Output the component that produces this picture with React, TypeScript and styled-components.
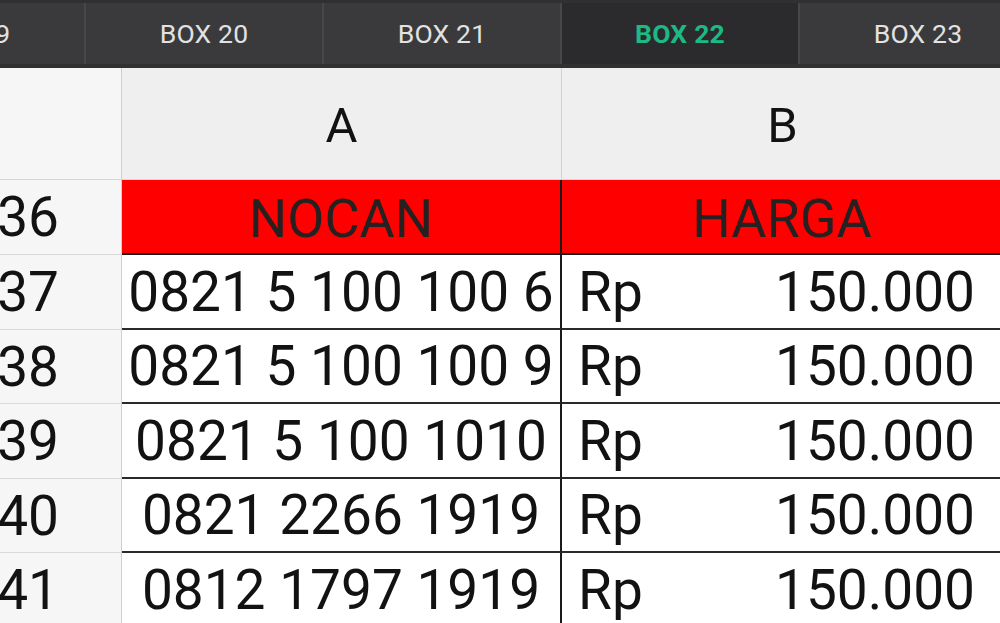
import React from "react";
import styled, { createGlobalStyle } from "styled-components";

const Global = createGlobalStyle`
  html, body { margin: 0; padding: 0; background: #ffffff; }
  body { font-family: Roboto, "Liberation Sans", sans-serif; overflow: hidden; }
`;

const Page = styled.div`
  width: 1000px;
  height: 623px;
  overflow: hidden;
  display: flex;
  flex-direction: column;
  background: #ffffff;
`;

const TabBar = styled.div`
  height: 68px;
  flex: none;
  display: flex;
  background: #3a3a3c;
  border-top: 3px solid #303032;
  border-bottom: 4px solid #313133;
  box-sizing: border-box;
  overflow: hidden;
`;

const Tab = styled.div<{ $active?: boolean; $offset?: number }>`
  flex: none;
  width: 236px;
  margin-left: ${(p) => p.$offset ?? 0}px;
  display: flex;
  align-items: center;
  justify-content: center;
  font-size: 26.5px;
  font-weight: ${(p) => (p.$active ? 700 : 400)};
  color: ${(p) => (p.$active ? "#1db985" : "#e2e2e2")};
  background: ${(p) => (p.$active ? "#2b2b2d" : "#3a3a3c")};
  border-right: 2px solid #47474a;
  letter-spacing: 0.2px;
`;

const Sheet = styled.div`
  flex: 1;
  display: grid;
  grid-template-columns: 122px 440px 442px;
  grid-template-rows: 112px 75px 75px 74px 75px 74px 75px;
  color: #121212;
`;

const Corner = styled.div`
  background: #f6f6f6;
  border-right: 1px solid #cfcfcf;
  border-bottom: 1px solid #d6d6d6;
`;

const ColHead = styled.div`
  background: #efefef;
  border-right: 1px solid #cfd3d8;
  border-bottom: 1px solid #d6d6d6;
  display: flex;
  align-items: center;
  justify-content: center;
  font-size: 49px;
  padding-top: 4px;
`;

const RowHead = styled.div`
  background: #f6f6f6;
  border-right: 1px solid #cfcfcf;
  border-bottom: 1px solid #d9d9d9;
  display: flex;
  align-items: center;
  justify-content: flex-end;
  padding-right: 62px;
  font-size: 55px;
  overflow: visible;
  white-space: nowrap;
`;

const TitleCell = styled.div`
  background: #ff0000;
  color: #262020;
  border-right: 2px solid #1a1a1a;
  border-bottom: 2px solid #1a1a1a;
  display: flex;
  align-items: center;
  justify-content: center;
  font-size: 54px;
  padding-top: 4px;
`;

const NumCell = styled.div`
  border-right: 2px solid #1a1a1a;
  border-bottom: 2px solid #2a2a2a;
  display: flex;
  align-items: center;
  justify-content: center;
  font-size: 55px;
  white-space: nowrap;
  overflow: hidden;
`;

const PriceCell = styled.div`
  border-bottom: 2px solid #2a2a2a;
  display: flex;
  align-items: center;
  justify-content: space-between;
  font-size: 55px;
  padding: 0 29px 0 16px;
  white-space: nowrap;
`;

const rows = [
  { n: 37, num: "0821 5 100 100 6" },
  { n: 38, num: "0821 5 100 100 9" },
  { n: 39, num: "0821 5 100 1010" },
  { n: 40, num: "0821 2266 1919" },
  { n: 41, num: "0812 1797 1919" },
];

export default function App() {
  return (
    <Page>
      <Global />
      <TabBar>
        <Tab $offset={-152}>BOX 19</Tab>
        <Tab>BOX 20</Tab>
        <Tab>BOX 21</Tab>
        <Tab $active>BOX 22</Tab>
        <Tab>BOX 23</Tab>
      </TabBar>
      <Sheet>
        <Corner />
        <ColHead>A</ColHead>
        <ColHead>B</ColHead>
        <RowHead>36</RowHead>
        <TitleCell>NOCAN</TitleCell>
        <TitleCell>HARGA</TitleCell>
        {rows.map((r) => (
          <React.Fragment key={r.n}>
            <RowHead>{r.n}</RowHead>
            <NumCell>{r.num}</NumCell>
            <PriceCell>
              <span>Rp</span>
              <span>150.000</span>
            </PriceCell>
          </React.Fragment>
        ))}
      </Sheet>
    </Page>
  );
}
